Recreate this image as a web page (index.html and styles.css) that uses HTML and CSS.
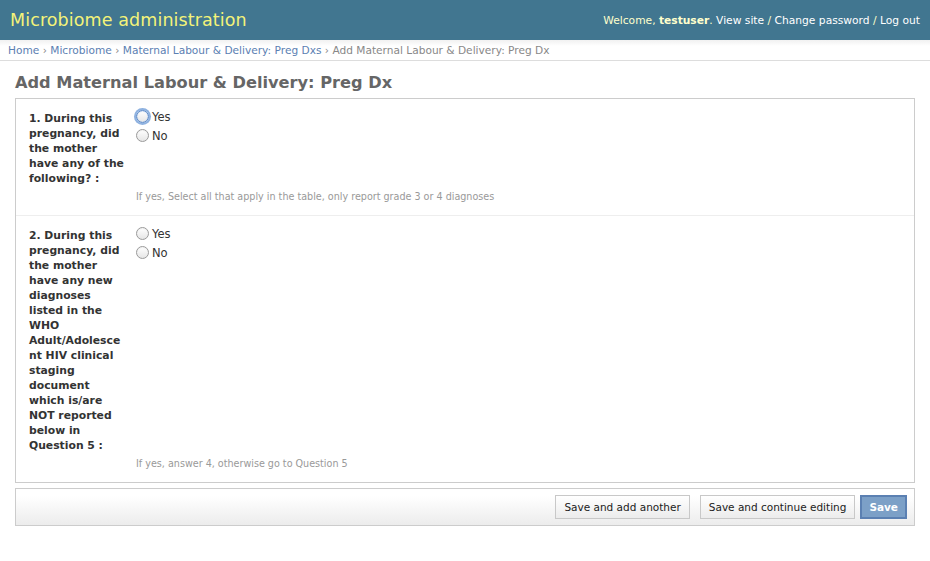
FILE: index.html
```html
<!DOCTYPE html>
<html>
<head>
<meta charset="utf-8">
<title>Add Maternal Labour &amp; Delivery: Preg Dx</title>
<link rel="stylesheet" href="styles.css">
</head>
<body>
<div class="header">
  <div class="site-name">Microbiome administration</div>
  <div class="user-tools">Welcome, <strong>testuser</strong>. <a href="#">View site</a> / <a href="#">Change password</a> / <a href="#">Log out</a></div>
</div>
<div class="breadcrumbs"><a href="#">Home</a> &rsaquo; <a href="#">Microbiome</a> &rsaquo; <a href="#">Maternal Labour &amp; Delivery: Preg Dxs</a> &rsaquo; Add Maternal Labour &amp; Delivery: Preg Dx</div>
<div class="content">
  <h1 class="title">Add Maternal Labour &amp; Delivery: Preg Dx</h1>
  <form>
    <div class="module">
      <div class="form-row">
        <div class="field">
          <label class="q-label">1. During this pregnancy, did the mother have any of the following?&nbsp;:</label>
          <ul class="radios">
            <li><input type="radio" name="q1" class="radio focused"> <span>Yes</span></li>
            <li><input type="radio" name="q1" class="radio"> <span>No</span></li>
          </ul>
        </div>
        <p class="help">If yes, Select all that apply in the table, only report grade 3 or 4 diagnoses</p>
      </div>
      <div class="form-row last">
        <div class="field">
          <label class="q-label">2. During this pregnancy, did the mother have any new diagnoses listed in the WHO Adult/Adolescent HIV clinical staging document which is/are NOT reported below in Question 5&nbsp;:</label>
          <ul class="radios">
            <li><input type="radio" name="q2" class="radio"> <span>Yes</span></li>
            <li><input type="radio" name="q2" class="radio"> <span>No</span></li>
          </ul>
        </div>
        <p class="help">If yes, answer 4, otherwise go to Question 5</p>
      </div>
    </div>
    <div class="submit-row">
      <button type="button" class="btn">Save and add another</button>
      <button type="button" class="btn">Save and continue editing</button>
      <button type="button" class="btn default">Save</button>
    </div>
  </form>
</div>
</body>
</html>
```
FILE: styles.css
```css
* { box-sizing: border-box; }
html, body { margin: 0; padding: 0; }
body {
  font-family: "DejaVu Sans", "Lucida Grande", Verdana, sans-serif;
  font-size: 12px;
  color: #333;
  background: #fff;
  width: 930px;
}
a { color: #5b80b2; text-decoration: none; }

.header {
  height: 40px;
  background: #417690;
  display: flex;
  align-items: center;
  justify-content: space-between;
  padding: 0 10px 0 10px;
}
.site-name {
  color: #f4f379;
  font-size: 17.5px;
  letter-spacing: 0.1px;
}
.user-tools {
  color: #ffffcc;
  font-size: 10.7px;
  padding-top: 1px;
}
.user-tools strong { font-weight: bold; }
.user-tools a { color: #fff; }

.breadcrumbs {
  height: 21px;
  line-height: 20px;
  padding: 0 8px;
  font-size: 10.6px;
  color: #888;
  background: linear-gradient(#f1f1f1, #fff 6px, #fff);
  border-bottom: 1px solid #ddd;
}
.breadcrumbs a { color: #5b80b2; }

.content { padding: 0 15px; }
.title {
  margin: 10px 0 3px 0;
  font-size: 16.2px;
  line-height: 24px;
  color: #666;
  font-weight: bold;
}

.module {
  border: 1px solid #ccc;
  background: #fff;
}
.form-row {
  padding: 12px 12px 12px 13px;
  border-bottom: 1px solid #eee;
}
.form-row.last { border-bottom: none; }
.field { display: flex; align-items: flex-start; }
.q-label {
  width: 98px;
  flex: none;
  margin-right: 9px;
  font-weight: bold;
  font-size: 10.8px;
  line-height: 15px;
  color: #333;
  overflow-wrap: anywhere;
}
.radios {
  list-style: none;
  margin: 0;
  padding: 0;
  font-size: 11.5px;
  color: #333;
}
.radios li {
  height: 19px;
  display: flex;
  align-items: center;
  margin-top: -4px;
}
.radios li + li { margin-top: 0; }
.radio {
  appearance: none;
  -webkit-appearance: none;
  width: 13px;
  height: 13px;
  margin: 0 3px 0 0;
  border-radius: 50%;
  border: 1px solid #9a9a9a;
  background: linear-gradient(#fff, #e6e6e6);
  box-shadow: inset 0 1px 1px rgba(0,0,0,0.05);
}
.radio.focused {
  border-color: #5a89c8;
  box-shadow: 0 0 0 2px #8fb2e0, inset 0 0 1px #6a97d6;
}
.radios span { line-height: 14px; }
.help {
  margin: 4px 0 0 107px;
  font-size: 9.6px;
  line-height: 13px;
  color: #999;
}

.submit-row {
  margin-top: 5px;
  border: 1px solid #ccc;
  height: 38px;
  background: linear-gradient(#fff, #fff 20%, #ececec);
  display: flex;
  justify-content: flex-end;
  align-items: center;
  padding: 0 7px 1px 0;
}
.btn {
  font-family: "DejaVu Sans", "Lucida Grande", Verdana, sans-serif;
  font-size: 10.5px;
  height: 24px;
  padding: 0 8px;
  border: 1px solid #c8c8c8;
  border-radius: 0;
  background: linear-gradient(#fff, #ececec);
  color: #222;
  margin-left: 10px;
}
.btn.default {
  margin-left: 5px;
  border: 2px solid #5b80b2;
  background: #7ca0c7;
  color: #fff;
  font-weight: bold;
  padding: 0 7px;
}
```
